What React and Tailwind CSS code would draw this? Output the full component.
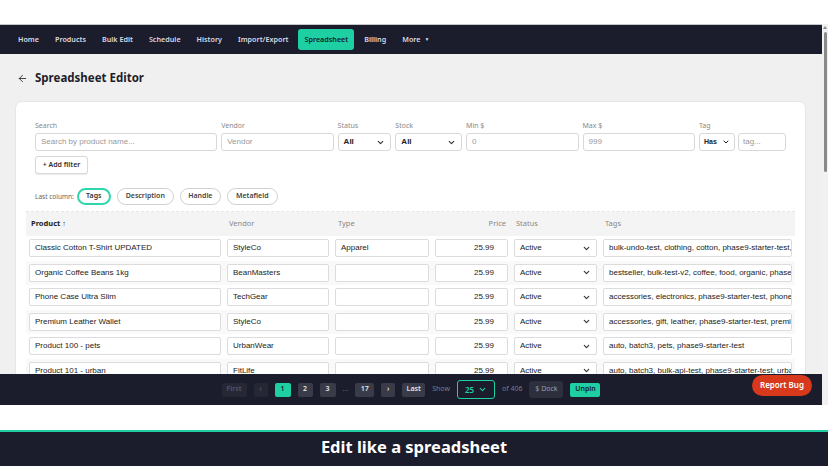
import { ChevronDown, ArrowLeft } from "lucide-react";

const ui = { fontFamily: '"Noto Sans", "Open Sans", sans-serif' };
const arial = { fontFamily: '"Liberation Sans", Arial, sans-serif' };

const navItems = ["Home", "Products", "Bulk Edit", "Schedule", "History", "Import/Export", "Spreadsheet", "Billing"];

const rows = [
  ["Classic Cotton T-Shirt UPDATED", "StyleCo", "Apparel", "bulk-undo-test, clothing, cotton, phase9-starter-test, sale"],
  ["Organic Coffee Beans 1kg", "BeanMasters", "", "bestseller, bulk-test-v2, coffee, food, organic, phase9-starter-test"],
  ["Phone Case Ultra Slim", "TechGear", "", "accessories, electronics, phase9-starter-test, phone"],
  ["Premium Leather Wallet", "StyleCo", "", "accessories, gift, leather, phase9-starter-test, premium"],
  ["Product 100 - pets", "UrbanWear", "", "auto, batch3, pets, phase9-starter-test"],
  ["Product 101 - urban", "FitLife", "", "auto, batch3, bulk-api-test, phase9-starter-test, urban"],
];

const Field = ({ label, width, placeholder, value, select }) => (
  <div className="flex flex-col gap-[3px]" style={{ width }}>
    <span className="text-[7px] leading-[9px] text-[#888]">{label}</span>
    <div
      className="flex h-[18px] items-center justify-between rounded-[3px] border border-[#d8d8d8] bg-white px-[5px] text-[8px]"
      style={arial}
    >
      {select ? (
        <>
          <span className="font-bold text-[#222]">{value}</span>
          <ChevronDown size={9} strokeWidth={3} className="text-[#333]" />
        </>
      ) : (
        <span className={value ? "text-[#222]" : "text-[#999]"}>{value || placeholder}</span>
      )}
    </div>
  </div>
);

const Cell = ({ children, right, className = "" }) => (
  <div className="min-w-0 px-[3px]">
    <div
      className={`flex h-[18px] items-center overflow-hidden whitespace-nowrap rounded-[2px] border border-[#dcdcdc] bg-white px-[5px] text-[8px] text-[#222] ${right ? "justify-end pr-[13px]" : ""} ${className}`}
      style={arial}
    >
      {children}
    </div>
  </div>
);

const PageBtn = ({ children, tone = "dark", w }) => {
  const tones = {
    dim: "bg-[#262735] text-[#55566a]",
    dark: "bg-[#3a3b48] text-[#e5e5e5]",
    active: "bg-[#1fcfa4] text-[#1b1c2b]",
  };
  return (
    <div
      className={`flex h-[14px] items-center justify-center rounded-[2px] text-[7px] font-semibold ${tones[tone]}`}
      style={{ width: w }}
    >
      {children}
    </div>
  );
};

export default function App() {
  return (
    <div className="flex h-[466px] w-[828px] flex-col overflow-hidden bg-white" style={ui}>
      <div className="h-[24px] shrink-0 bg-white" />

      <div className="flex h-[381px] shrink-0">
        <div className="flex min-w-0 flex-1 flex-col">
          {/* nav */}
          <nav className="flex h-[30px] shrink-0 items-center gap-[4px] border-t border-[#c8c8c8] bg-[#1b1c2c] pl-[12px] text-[7.2px] font-semibold">
            {navItems.map((n) => (
              <div
                key={n}
                className={
                  n === "Spreadsheet"
                    ? "rounded-[3px] bg-[#1fcfa4] px-[6px] py-[5px] text-[#12222a]"
                    : "px-[6px] py-[5px] text-[#d9dae3]"
                }
              >
                {n}
              </div>
            ))}
            <div className="flex items-center gap-[4px] px-[6px] text-[#d9dae3]">
              More <span className="text-[5px]">▼</span>
            </div>
          </nav>

          {/* content */}
          <main className="min-h-0 flex-1 overflow-hidden bg-[#f0f0f0]">
            <div className="flex h-[47px] items-center gap-[7px] pl-[17px] pt-[1px]">
              <ArrowLeft size={11} strokeWidth={2} className="text-[#333]" />
              <h1 className="text-[11.5px] font-bold text-[#1e1e2a]">Spreadsheet Editor</h1>
            </div>

            <section className="mx-[15px] mr-[16px] rounded-[7px] border border-[#e6e6e6] bg-white px-[10px] pt-[19px] pb-[10px]">
              <div className="px-[9px]">
                <div className="flex gap-[4px]">
                  <Field label="Search" width={183} placeholder="Search by product name..." />
                  <Field label="Vendor" width={113} placeholder="Vendor" />
                  <Field label="Status" width={54} value="All" select />
                  <Field label="Stock" width={67} value="All" select />
                  <Field label="Min $" width={113} placeholder="0" />
                  <Field label="Max $" width={113} placeholder="999" />
                  <div className="flex flex-col gap-[3px]">
                    <span className="text-[7px] leading-[9px] text-[#888]">Tag</span>
                    <div className="flex gap-[3px]">
                      <div className="flex h-[18px] w-[36px] items-center justify-between rounded-[3px] border border-[#d8d8d8] px-[4px] text-[7px] font-bold text-[#222]" style={arial}>
                        Has <ChevronDown size={8} strokeWidth={3} />
                      </div>
                      <div className="flex h-[18px] w-[48px] items-center rounded-[3px] border border-[#d8d8d8] px-[4px] text-[8px] text-[#999]" style={arial}>
                        tag...
                      </div>
                    </div>
                  </div>
                </div>

                <button className="mt-[5px] flex h-[18px] w-[53px] items-center justify-center rounded-[3px] border border-[#d8d8d8] bg-white text-[7px] font-semibold text-[#333] shadow-[0_1px_1px_rgba(0,0,0,0.08)]">
                  + Add filter
                </button>

                <div className="mt-[14px] flex items-center gap-[6px] text-[7px]">
                  <span className="mr-[-3px] text-[6.5px] text-[#666]">Last column:</span>
                  <span className="flex h-[17px] w-[34px] items-center justify-center rounded-full border-2 border-[#2fd6ab] font-semibold text-[#333]">Tags</span>
                  <span className="flex h-[17px] w-[57px] items-center justify-center rounded-full border border-[#cfcfcf] font-semibold text-[#444]">Description</span>
                  <span className="flex h-[17px] w-[41px] items-center justify-center rounded-full border border-[#cfcfcf] font-semibold text-[#444]">Handle</span>
                  <span className="flex h-[17px] w-[51px] items-center justify-center rounded-full border border-[#cfcfcf] font-semibold text-[#444]">Metafield</span>
                </div>
              </div>

              {/* table */}
              <div className="mt-[6px] border-t border-dashed border-[#e4e4e4]">
                <div className="grid h-[24px] grid-cols-[198px_108px_100px_79px_89px_minmax(0,1fr)] items-center bg-[#f4f4f4] text-[7.5px]">
                  <span className="px-[5px] font-bold text-[#222]">Product ↑</span>
                  <span className="px-[5px] text-[#888]">Vendor</span>
                  <span className="px-[6px] text-[#888]">Type</span>
                  <span className="px-[5px] text-right text-[#888]">Price</span>
                  <span className="px-[5px] text-[#888]">Status</span>
                  <span className="px-[5px] text-[#888]">Tags</span>
                </div>
                {rows.map((r, i) => (
                  <div
                    key={r[0]}
                    className={`grid h-[24.5px] grid-cols-[198px_108px_100px_79px_89px_minmax(0,1fr)] items-center ${i % 2 ? "bg-[#f9f9f9]" : "bg-white"}`}
                  >
                    <Cell>{r[0]}</Cell>
                    <Cell>{r[1]}</Cell>
                    <Cell>{r[2]}</Cell>
                    <Cell right>25.99</Cell>
                    <Cell className="justify-between">
                      <span>Active</span>
                      <ChevronDown size={9} strokeWidth={3} className="text-[#333]" />
                    </Cell>
                    <Cell>{r[3]}</Cell>
                  </div>
                ))}
              </div>
            </section>
          </main>

          {/* pagination footer */}
          <footer className="grid h-[31px] shrink-0 grid-cols-[1fr_auto_1fr] items-center bg-[#1b1c2c] text-[7px]">
            <div />
            <div className="flex items-center gap-[7px]">
              <PageBtn tone="dim" w={25}>First</PageBtn>
              <PageBtn tone="dim" w={14}>‹</PageBtn>
              <PageBtn tone="active" w={16}>1</PageBtn>
              <PageBtn w={15}>2</PageBtn>
              <PageBtn w={16}>3</PageBtn>
              <span className="text-[#666]">...</span>
              <PageBtn w={19}>17</PageBtn>
              <PageBtn w={14}>›</PageBtn>
              <PageBtn w={23}>Last</PageBtn>
              <span className="text-[#7a7b88]">Show</span>
              <div className="flex h-[19px] w-[38px] items-center justify-between rounded-[3px] border border-[#1fcfa4] bg-[#1b1c2c] px-[7px] text-[8px] font-semibold text-[#1fcfa4]">
                25 <ChevronDown size={9} strokeWidth={3} />
              </div>
              <span className="text-[#7a7b88]">of 406</span>
              <div className="flex h-[17px] w-[34px] items-center justify-center rounded-[3px] bg-[#2e2f3c] text-[#9a9bab]">$ Dock</div>
              <div className="flex h-[14px] w-[30px] items-center justify-center rounded-[2px] bg-[#1fcfa4] font-semibold text-[#12222a]">Unpin</div>
            </div>
            <div className="flex justify-end pr-[10px]">
              <button className="mt-[-9px] flex h-[21px] w-[60px] items-center justify-center rounded-full bg-[#d8391c] text-[8px] font-semibold text-white">
                Report Bug
              </button>
            </div>
          </footer>
        </div>

        {/* scrollbar */}
        <div className="flex w-[6px] shrink-0 flex-col items-center bg-[#f1f1f1]">
          <div className="mt-[2px] h-0 w-0 border-x-[2px] border-b-[3px] border-x-transparent border-b-[#888]" />
          <div className="mt-[3px] h-[140px] w-[3px] rounded-full bg-[#8a8a8a]" />
        </div>
      </div>

      <div className="h-[25px] shrink-0 bg-white" />
      <div className="h-[2px] shrink-0 bg-[#1fcfa4]" />
      <div className="flex flex-1 items-center justify-center bg-[#1b1c2c] pb-[3px]">
        <span className="text-[16.5px] font-bold text-white">Edit like a spreadsheet</span>
      </div>
    </div>
  );
}
